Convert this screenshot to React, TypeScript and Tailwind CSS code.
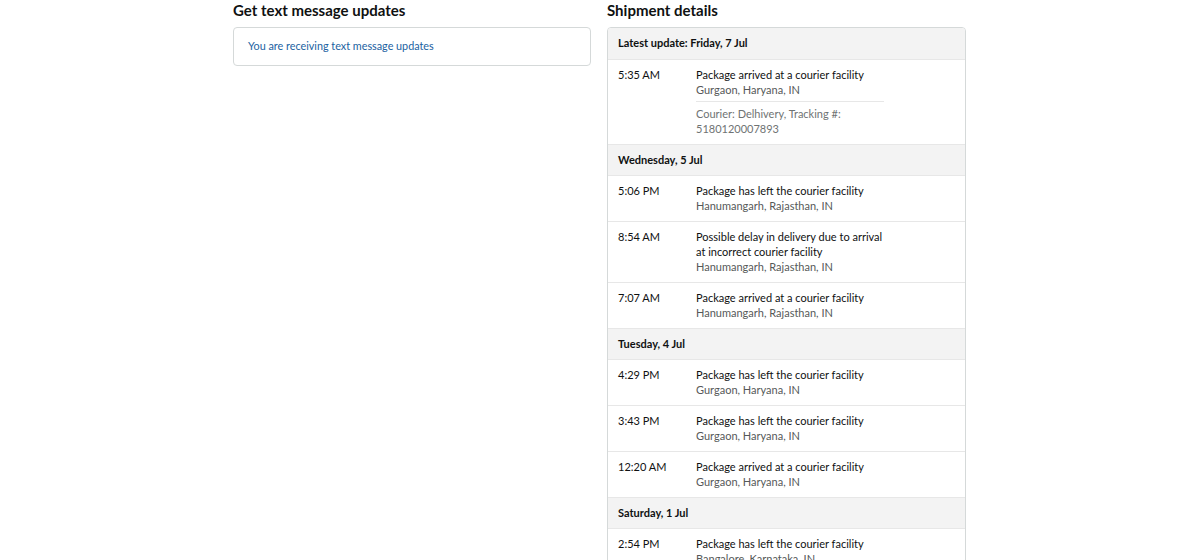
const EVENTS = [
  {
    day: "Latest update: Friday, 7 Jul",
    rows: [
      {
        time: "5:35 AM",
        text: "Package arrived at a courier facility",
        place: "Gurgaon, Haryana, IN",
        courier: "Courier: Delhivery, Tracking #: 5180120007893",
      },
    ],
  },
  {
    day: "Wednesday, 5 Jul",
    rows: [
      { time: "5:06 PM", text: "Package has left the courier facility", place: "Hanumangarh, Rajasthan, IN" },
      {
        time: "8:54 AM",
        text: "Possible delay in delivery due to arrival at incorrect courier facility",
        place: "Hanumangarh, Rajasthan, IN",
      },
      { time: "7:07 AM", text: "Package arrived at a courier facility", place: "Hanumangarh, Rajasthan, IN" },
    ],
  },
  {
    day: "Tuesday, 4 Jul",
    rows: [
      { time: "4:29 PM", text: "Package has left the courier facility", place: "Gurgaon, Haryana, IN" },
      { time: "3:43 PM", text: "Package has left the courier facility", place: "Gurgaon, Haryana, IN" },
      { time: "12:20 AM", text: "Package arrived at a courier facility", place: "Gurgaon, Haryana, IN" },
    ],
  },
  {
    day: "Saturday, 1 Jul",
    rows: [{ time: "2:54 PM", text: "Package has left the courier facility", place: "Bangalore, Karnataka, IN" }],
  },
];

export default function App() {
  return (
    <div
      className="w-[1200px] h-[560px] overflow-hidden bg-white text-[#0f1111]"
      style={{ fontFamily: 'Lato, "Open Sans", Arial, sans-serif' }}
    >
      <div className="flex gap-[16px] pl-[233px]">
        <div className="w-[358px]">
          <h2 className="text-[15px] leading-[20px] font-bold mb-[7px]">Get text message updates</h2>
          <div className="border border-[#d5d9d9] rounded-[4px] px-[14px] h-[39px] flex items-center">
            <span className="text-[10.8px] text-[#2162a1]">You are receiving text message updates</span>
          </div>
        </div>

        <div className="w-[359px]">
          <h2 className="text-[15px] leading-[20px] font-bold mb-[7px]">Shipment details</h2>
          <div className="border border-[#d5d9d9] rounded-t-[4px] overflow-hidden">
            {EVENTS.map((group, gi) => (
              <div key={gi}>
                <div
                  className={`bg-[#f3f3f3] h-[31px] px-[10px] flex items-center text-[11px] font-bold ${gi > 0 ? "border-t border-[#e7e7e7]" : ""}`}
                >
                  {group.day}
                </div>
                {group.rows.map((r, ri) => (
                  <div key={ri} className="flex px-[10px] pt-[7px] pb-[8px] border-t border-[#e7e7e7] text-[11px] leading-[15px]">
                    <div className="w-[78px] shrink-0 text-[#0f1111]">{r.time}</div>
                    <div className="w-[188px]">
                      <div className="text-[#0f1111]">{r.text}</div>
                      <div className="text-[#565959]">{r.place}</div>
                      {r.courier && (
                        <div className="mt-[4px] pt-[4px] border-t border-[#e7e7e7] text-[#6f7373]">{r.courier}</div>
                      )}
                    </div>
                  </div>
                ))}
              </div>
            ))}
          </div>
        </div>
      </div>
    </div>
  );
}
